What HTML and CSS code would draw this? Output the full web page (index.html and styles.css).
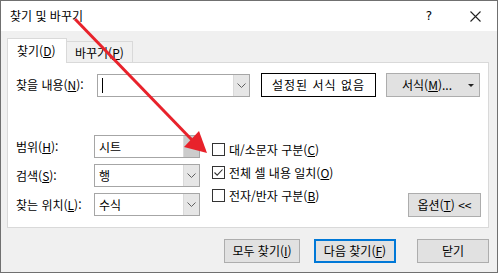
FILE: index.html
```html
<!DOCTYPE html>
<html lang="ko">
<head>
  <meta charset="UTF-8">
  <meta name="viewport" content="width=device-width, initial-scale=1.0">
  <title>찾기 및 바꾸기</title>
  <link rel="stylesheet" href="styles.css">
</head>
<body>
  <div class="dialog">
    <div class="titlebar">
      <span class="title">찾기 및 바꾸기</span>
      <span class="help">?</span>
      <svg class="close" width="11" height="11" viewBox="0 0 11 11">
        <path d="M0.5 0.5 L10.5 10.5 M10.5 0.5 L0.5 10.5" stroke="#222" stroke-width="1.1" fill="none"/>
      </svg>
    </div>

    <div class="content">
      <div class="tabs">
        <div class="tab active">찾기(<u>D</u>)</div>
        <div class="tab">바꾸기(<u>P</u>)</div>
      </div>

      <div class="panel">
        <div class="find-row">
          <span class="label find-label">찾을 내용(<u>N</u>):</span>
          <div class="combo find-combo">
            <div class="combo-text"><span class="caret"></span></div>
            <div class="combo-btn">
              <svg width="9" height="5" viewBox="0 0 9 5"><path d="M0.5 0.5 L4.5 4.5 L8.5 0.5" stroke="#606060" fill="none"/></svg>
            </div>
          </div>
          <div class="btn preview">설정된 서식 없음</div>
          <div class="btn format">
            <span>서식(<u>M</u>)...</span>
            <span class="tri"></span>
          </div>
        </div>

        <div class="options">
          <div class="fields">
            <div class="field">
              <span class="label">범위(<u>H</u>):</span>
              <div class="combo small-combo">
                <div class="combo-text">시트</div>
                <div class="combo-btn hot"></div>
              </div>
            </div>
            <div class="field">
              <span class="label">검색(<u>S</u>):</span>
              <div class="combo small-combo">
                <div class="combo-text">행</div>
                <div class="combo-btn">
                  <svg width="9" height="5" viewBox="0 0 9 5"><path d="M0.5 0.5 L4.5 4.5 L8.5 0.5" stroke="#606060" fill="none"/></svg>
                </div>
              </div>
            </div>
            <div class="field">
              <span class="label">찾는 위치(<u>L</u>):</span>
              <div class="combo small-combo">
                <div class="combo-text">수식</div>
                <div class="combo-btn">
                  <svg width="9" height="5" viewBox="0 0 9 5"><path d="M0.5 0.5 L4.5 4.5 L8.5 0.5" stroke="#606060" fill="none"/></svg>
                </div>
              </div>
            </div>
          </div>

          <div class="checks">
            <div class="check"><span class="box"></span>대/소문자 구분(<u>C</u>)</div>
            <div class="check">
              <span class="box">
                <svg width="11" height="11" viewBox="0 0 11 11"><path d="M1.5 5.5 L4.2 8.2 L9.5 2.5" stroke="#333" stroke-width="1.1" fill="none"/></svg>
              </span>전체 셀 내용 일치(<u>O</u>)
            </div>
            <div class="check"><span class="box"></span>전자/반자 구분(<u>B</u>)</div>
          </div>

          <div class="btn options-btn">옵션(<u>T</u>) &lt;&lt;</div>
        </div>
      </div>

      <div class="actions">
        <div class="btn find-all">모두 찾기(<u>I</u>)</div>
        <div class="btn find-next default">다음 찾기(<u>F</u>)</div>
        <div class="btn close-btn">닫기</div>
      </div>
    </div>

    <svg class="arrow" width="498" height="273" viewBox="0 0 498 273">
      <line x1="75" y1="19" x2="193" y2="141" stroke="#e8222b" stroke-width="3"/>
      <polygon points="207,153 199,131 184,147" fill="#e8222b"/>
    </svg>
  </div>
</body>
</html>
```

FILE: styles.css
```css
* {
  box-sizing: border-box;
}
body {
  margin: 0;
  font-family: 'Noto Sans CJK KR', 'Noto Sans', sans-serif;
  font-size: 12px;
  color: #000;
}
u {
  text-decoration: underline;
  text-underline-offset: 1px;
}
.dialog {
  position: relative;
  width: 498px;
  height: 273px;
  background-color: #f0f0f0;
  border: 1px solid #707070;
  overflow: hidden;
}
.titlebar {
  display: flex;
  align-items: center;
  height: 30px;
  background-color: #ffffff;
  padding-left: 9px;
}
.title {
  flex: 1;
  line-height: 16px;
}
.help {
  font-family: 'DejaVu Sans', sans-serif;
  font-size: 12px;
  margin-right: 38px;
}
.close {
  margin-right: 16px;
}

.content {
  padding: 7px 8px 0 6px;
}
.tabs {
  display: flex;
  align-items: flex-end;
  height: 25px;
  margin-bottom: -1px;
}
.tab {
  display: flex;
  align-items: center;
  height: 22px;
  padding: 0 8px;
  border: 1px solid #d9d9d9;
  border-left: none;
  background-color: #f0f0f0;
  width: 66px;
}
.tab.active {
  position: relative;
  z-index: 1;
  height: 25px;
  width: 60px;
  padding: 0 9px 2px;
  border-left: 1px solid #d9d9d9;
  border-bottom: none;
  background-color: #ffffff;
}
.panel {
  height: 166px;
  background-color: #ffffff;
  border: 1px solid #d9d9d9;
  padding: 10px 0 0 8px;
}

.label {
  line-height: 16px;
  white-space: nowrap;
}
.find-row {
  display: flex;
  align-items: center;
  height: 24px;
}
.find-label {
  width: 81px;
}
.combo {
  display: flex;
  height: 23px;
  border: 1px solid #a6a6a6;
  background-color: #ffffff;
}
.combo-text {
  flex: 1;
  display: flex;
  align-items: center;
  padding-left: 4px;
  line-height: 16px;
}
.combo-btn {
  width: 16px;
  display: flex;
  align-items: center;
  justify-content: center;
  background-color: #e6e6e6;
  border-left: 1px solid #dadada;
}
.combo-btn.hot {
  background-color: #cccccc;
}
.find-combo {
  width: 153px;
}
.caret {
  width: 1px;
  height: 15px;
  background-color: #000;
}

.btn {
  display: flex;
  align-items: center;
  justify-content: center;
  height: 24px;
  background-color: #e1e1e1;
  border: 1px solid #adadad;
  line-height: 16px;
  white-space: nowrap;
}
.preview {
  width: 115px;
  margin-left: 11px;
  background-color: #ffffff;
  border: 1px solid #000;
  letter-spacing: 1px;
}
.format {
  width: 94px;
  margin-left: 10px;
  position: relative;
  padding-right: 12px;
}
.tri {
  position: absolute;
  right: 5px;
  top: 10px;
  border-left: 3px solid transparent;
  border-right: 3px solid transparent;
  border-top: 3px solid #222;
}

.options {
  display: flex;
  margin-top: 38px;
  height: 82px;
}
.fields {
  display: flex;
  flex-direction: column;
  gap: 6px;
}
.field {
  display: flex;
  align-items: center;
}
.field .label {
  width: 78px;
}
.small-combo {
  width: 106px;
}
.checks {
  display: flex;
  flex-direction: column;
  margin-left: 12px;
  margin-top: 3px;
}
.check {
  display: flex;
  align-items: center;
  height: 23px;
  line-height: 16px;
  white-space: nowrap;
}
.box {
  display: flex;
  align-items: center;
  justify-content: center;
  width: 13px;
  height: 13px;
  border: 1px solid #333;
  background-color: #fff;
  margin-right: 4px;
}
.options-btn {
  align-self: flex-end;
  width: 73px;
  margin-left: auto;
  margin-right: 7px;
}

.actions {
  display: flex;
  justify-content: flex-end;
  margin-top: 11px;
}
.find-all {
  width: 76px;
}
.find-next {
  width: 82px;
  margin-left: 14px;
}
.default {
  border: 2px solid #0078d7;
}
.close-btn {
  width: 72px;
  margin-left: 21px;
  margin-right: 0;
}

.arrow {
  position: absolute;
  left: -1px;
  top: -1px;
  pointer-events: none;
}
```
